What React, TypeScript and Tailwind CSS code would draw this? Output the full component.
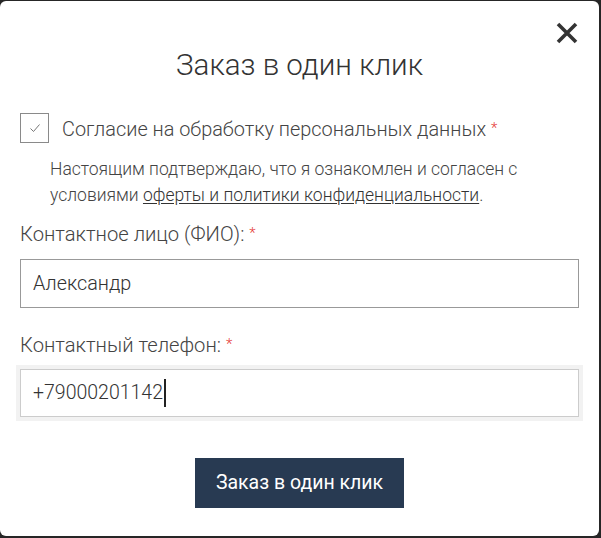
import { useState } from "react"

function Req() {
  return <span className="relative -top-[3px] text-[15px] leading-none text-[#e53935]">*</span>
}

export default function App() {
  const [agree, setAgree] = useState(true)

  return (
    <div className="h-[538px] w-[601px] overflow-hidden bg-[#262626] pt-px font-['Roboto',sans-serif]">
      <div className="relative h-[535px] w-[599px] rounded-md bg-white px-5 pt-[46px]">
        <button className="absolute right-[21px] top-[21px] text-[#333]">
          <svg width="22" height="22" viewBox="0 0 22 22" fill="none">
            <path d="M2 2L20 20M20 2L2 20" stroke="currentColor" strokeWidth="3.6" />
          </svg>
        </button>

        <h2 className="text-center text-[29.5px] font-light leading-9 text-[#333]">
          Заказ в один клик
        </h2>

        <label className="mt-[30px] flex items-center gap-[13px]">
          <span
            onClick={() => setAgree(!agree)}
            className="flex h-[30px] w-[29px] items-center justify-center border border-[#8a8a8a]"
          >
            {agree && (
              <svg width="12" height="10" viewBox="0 0 12 10" fill="none">
                <path d="M1.5 5.5L4.5 8.5L10.5 1.5" stroke="#777" strokeWidth="1" />
              </svg>
            )}
          </span>
          <span className="pt-[3px] text-[19.9px] font-light leading-6 text-[#444]">
            Согласие на обработку персональных данных <Req />
          </span>
        </label>

        <p className="mt-[13px] pl-[30px] text-[17.5px] font-light leading-[26px] text-[#444]">
          Настоящим подтверждаю, что я ознакомлен и согласен с
          <br />
          условиями{" "}
          <a href="#" className="text-[#333] underline underline-offset-2">
            оферты и политики конфиденциальности
          </a>
          .
        </p>

        <div className="mt-[14px] text-[20.2px] font-light leading-6 text-[#444]">
          Контактное лицо (ФИО): <Req />
        </div>
        <input
          defaultValue="Александр"
          className="mt-[13px] block h-[49px] w-full border border-[#999] px-3 text-[19.8px] font-light text-[#333] outline-none"
        />

        <div className="mt-[25px] text-[20.2px] font-light leading-6 text-[#444]">
          Контактный телефон: <Req />
        </div>
        <div className="-mx-1 mt-[8px] bg-[#f2f2f2] p-1">
          <div className="flex h-[48px] items-center border border-[#ccc] bg-white px-3 text-[19.5px] font-light text-[#333]">
            +79000201142
            <span className="ml-px h-[28px] w-[2px] bg-[#222]" />
          </div>
        </div>

        <div className="mt-[37px] flex justify-center">
          <button className="h-[50px] w-[209px] bg-[#283a52] text-[19.5px] text-white">
            Заказ в один клик
          </button>
        </div>
      </div>
    </div>
  )
}
